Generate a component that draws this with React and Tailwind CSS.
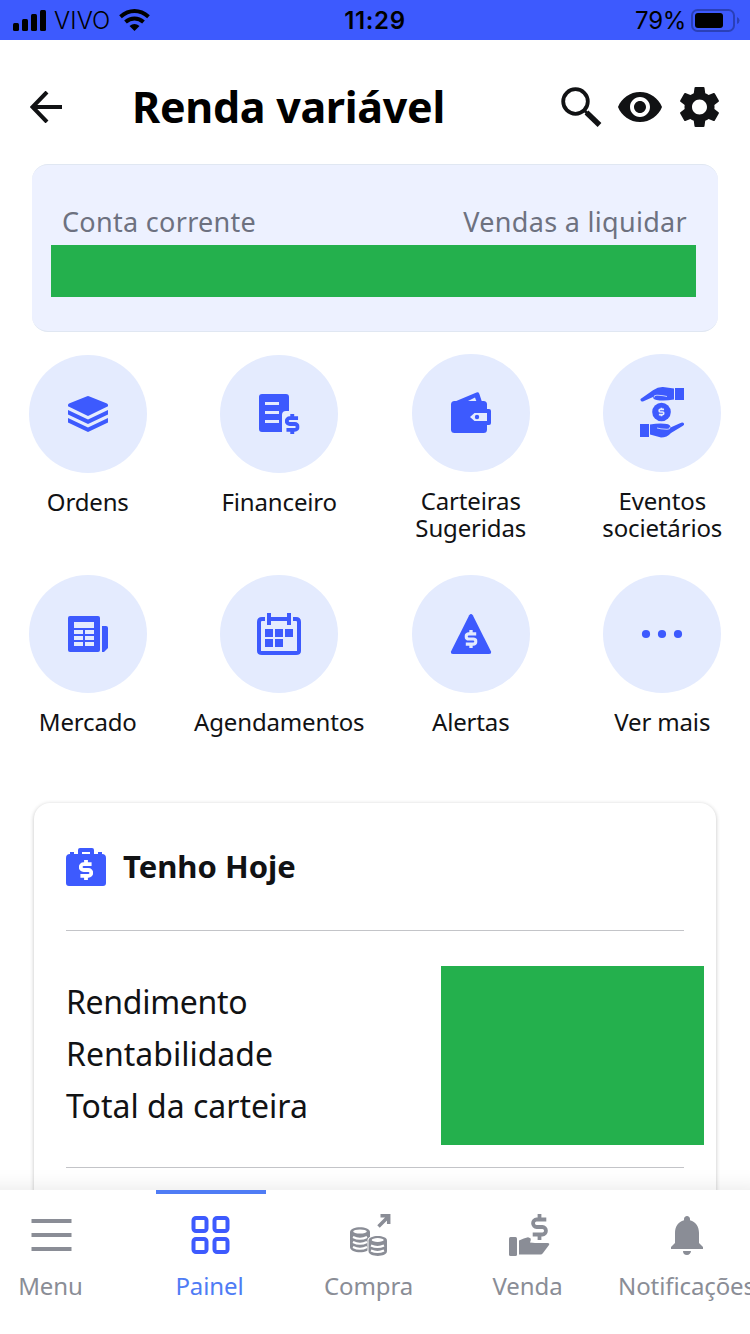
import React from 'react';
import { MdNotifications, MdRemoveRedEye, MdSettings } from 'react-icons/md';

const Dollar = ({ x, y, width, height, color, weight = 2.8 }) => (
    <svg x={x} y={y} width={width} height={height} viewBox="0 0 14 20" preserveAspectRatio="none" fill="none" stroke={color} strokeWidth={weight}>
        <path d="M7 0v4M7 16v4M12.6 4.2H4.6A2.9 2.9 0 0 0 4.6 10H9.4A2.9 2.9 0 0 1 9.4 15.8H1.4" />
    </svg>
);

const OrdersIcon = () => (
    <svg className="w-15 h-15" viewBox="0 0 60 60" fill="#3d5afe">
        <path d="M28.500 12.500q1.500-.8 3 0L49 19.500q1 .5 1 1.500v1.200L30 32 10 22.200V21q0-1 1-1.500z" />
        <path d="M10 26 30 35.500 50 26v4.500L30 40 10 30.500zM10 34 30 43.500 50 34v4.500L30 48 10 38.500z" />
    </svg>
);

const FinanceIcon = () => (
    <svg className="w-15 h-15" viewBox="0 0 60 60">
        <path fill="#3d5afe" d="M13 10h24q3 0 3 3v14h-3q-4 0-4 4v17H13q-3 0-3-3V13q0-3 3-3z" />
        <path stroke="#e4ebfe" strokeWidth="3" d="M16 19.500h14M16 28.500h14M16 37.500h14" />
        <Dollar x={36} y={30} width={14.5} height={20} color="#3d5afe" weight={3.8} />
    </svg>
);

const WalletIcon = () => (
    <svg className="w-15 h-15" viewBox="0 0 60 60" fill="#3d5afe">
        <path d="m14 18.500 21.500-9q2-.8 2.800 1.200L41 19zm12 0h9.500l-1.500-4z" fillRule="evenodd" />
        <rect x="10" y="18" width="36" height="32" rx="3.500" />
        <rect x="42" y="26" width="8" height="16" rx="2" />
        <path fill="#e4ebfe" d="M33.500 30H46v8H33.500L29 34z" />
        <circle cx="36" cy="34" r="2.200" />
    </svg>
);

const EventsIcon = () => (
    <svg className="w-15 h-15" viewBox="0 0 60 60" fill="#3d5afe">
        <rect x="43" y="5" width="9" height="12" />
        <path d="M8.500 16 21 7.300q5-3.500 10-3.300l11 1.500v11q-10 1.800-17.500.5-3.500-.7-3.500-3l-9.500 4.300q-2.500.8-3-1.300z" />
        <path fill="none" stroke="#e4ebfe" strokeWidth="0.8" d="M22 14.500q-.5-2.500 3-2.300 7 .3 10 1.300" />
        <circle cx="29.500" cy="29" r="9.300" />
        <rect x="8" y="41" width="9" height="13" />
        <path d="M18 41.500q10-1.800 17-.5 3.600.8 3.500 3.500l9.500-4.300q2.800-1.500 4 .2.500 1.200-1 2.300L39 50q-4 4.500-10 4.500L18 51.500z" />
        <path fill="none" stroke="#e4ebfe" strokeWidth="0.8" d="M38 44q.5 2.500-3 2.300-7-.3-10-1.300" />
        <Dollar x={26.2} y={24.5} width={6.5} height={9} color="#e4ebfe" weight={3.6} />
    </svg>
);

const MarketIcon = () => (
    <svg className="w-15 h-15" viewBox="0 0 60 60" fill="#3d5afe">
        <rect x="10" y="12" width="32" height="36" rx="2" />
        <path d="M44 22h4q2 0 2 2v20l-4 4h-2z" />
        <path fill="#e4ebfe" d="M16 18h20v6H16zM16 26h9v4h-9zM27 26h9v4h-9zM16 32h9v4h-9zM27 32h9v4h-9zM16 38h9v4h-9zM27 38h9v4h-9z" />
    </svg>
);

const CalendarIcon = () => (
    <svg className="w-15 h-15" viewBox="0 0 60 60" fill="#3d5afe">
        <path fill="none" stroke="#3d5afe" strokeWidth="4" d="M16 15h-3q-3 0-3 3v29q0 2 3 2h34q3 0 3-2V18q0-3-3-3h-3M22 15h16M20 9v12M40 9v12" />
        <path d="M16 25h8v8h-8zM26 25h8v8h-8zM36 25h8v8h-8zM16 35h8v8h-8zM26 35h8v8h-8z" />
    </svg>
);

const AlertIcon = () => (
    <svg className="w-15 h-15" viewBox="0 0 60 60" fill="#3d5afe">
        <path d="M28.200 11.200q1.800-2.400 3.600 0L50 47.500q.5 2.500-2 2.500H12q-2.500 0-2-2.500z" />
        <Dollar x={23.5} y={26} width={13} height={18} color="#e4ebfe" weight={3.6} />
    </svg>
);

const MoreIcon = () => (
    <svg className="w-15 h-15" viewBox="0 0 60 60" fill="#3d5afe">
        <circle cx="14" cy="30" r="4.100" />
        <circle cx="30" cy="30" r="4.100" />
        <circle cx="46" cy="30" r="4.100" />
    </svg>
);

const MenuIcon = () => (
    <svg className="w-12 h-12" viewBox="0 0 48 48" stroke="#8a8d96" strokeWidth="4">
        <path d="M4.500 10h40M4.500 24h40M4.500 38h40" />
    </svg>
);

const PanelIcon = () => (
    <svg className="w-12 h-12" viewBox="0 0 48 48" fill="none" stroke="#3d5afe" strokeWidth="4">
        <rect x="7.500" y="7" width="13" height="13" rx="2.500" />
        <rect x="28.500" y="7" width="13" height="13" rx="2.500" />
        <rect x="7.500" y="28" width="13" height="13" rx="2.500" />
        <rect x="28.500" y="28" width="13" height="13" rx="2.500" />
    </svg>
);

const BuyIcon = () => (
    <svg className="w-12 h-12" viewBox="0 0 48 48" fill="#8a8d96">
        <path d="M5 21c0-6.500 20-6.500 20 0v15c0 7-20 7-20 0z" />
        <ellipse cx="15" cy="20.500" rx="6.800" ry="2" fill="#fff" />
        <path fill="none" stroke="#fff" strokeWidth="2" d="M8 26q7 3.500 14 0M8 31q7 3.500 14 0M8 36q7 3.500 14 0" />
        <path fill="#fff" d="M22.500 29c0-6 20-6 20 0v11c0 7-20 7-20 0z" />
        <path d="M23.500 29.500c0-6 18.500-6 18.500 0v10.500c0 6.500-18.500 6.500-18.500 0z" />
        <ellipse cx="32.700" cy="29" rx="6" ry="1.900" fill="#fff" />
        <path fill="none" stroke="#fff" strokeWidth="2" d="M26 34.500q6.500 3 13 0M26 39.500q6.500 3 13 0" />
        <path fill="none" stroke="#8a8d96" strokeWidth="3.500" d="m33.500 15.500 10-10M35.500 4.800H43.700V13" />
    </svg>
);

const SellIcon = () => (
    <svg className="w-12 h-12" viewBox="0 0 48 48" fill="#8a8d96">
        <rect x="5" y="26" width="8" height="19" rx="1.500" />
        <path d="M15 29.500q5-2.500 9-3.200l2.500.9q1 2.200-.5 4.300l5 .5h12.500q2.500 0 1.500 2l-6 8q-1 1.500-2.500 1.500H15z" />
        <Dollar x={27} y={3} width={17} height={26} color="#8a8d96" weight={3.1} />
    </svg>
);

const shortcuts = [
    { label: 'Ordens', Icon: OrdersIcon },
    { label: 'Financeiro', Icon: FinanceIcon },
    { label: 'Carteiras Sugeridas', Icon: WalletIcon, tall: true },
    { label: 'Eventos societários', Icon: EventsIcon, tall: true },
    { label: 'Mercado', Icon: MarketIcon },
    { label: 'Agendamentos', Icon: CalendarIcon },
    { label: 'Alertas', Icon: AlertIcon },
    { label: 'Ver mais', Icon: MoreIcon },
];

const tabs = [
    { label: 'Menu', Icon: MenuIcon },
    { label: 'Painel', Icon: PanelIcon, active: true },
    { label: 'Compra', Icon: BuyIcon },
    { label: 'Venda', Icon: SellIcon },
    { label: 'Notificações', Icon: () => <MdNotifications className="w-12 h-12" /> },
];

const StatusBar = () => (
    <div className="h-10 shrink-0 bg-[#3d5afe] grid grid-cols-3 items-center text-black text-2xl font-['Inter',sans-serif]">
        <div className="flex items-center pl-[13px]">
            <svg className="w-[33px] h-[21px]" viewBox="0 0 33 21">
                <rect x="0" y="13" width="6" height="8" rx="1.500" />
                <rect x="9" y="9" width="6" height="12" rx="1.500" />
                <rect x="18" y="4" width="6" height="17" rx="1.500" />
                <rect x="27" y="0" width="6" height="21" rx="1.500" />
            </svg>
            <span className="mt-0.5 ml-2 w-[57px] font-light tracking-[0.1px]">VIVO</span>
            <svg className="ml-2 w-[31px] h-[22px]" viewBox="0 0 31 22" fill="none" stroke="#000" strokeWidth="4">
                <path d="M1.500 7.700Q8 2 15.500 2t14 5.700" />
                <path d="M6.500 13q4-3.500 9-3.500t9 3.500" />
                <path fill="#000" stroke="none" d="M15.500 22 10.500 17q5-3.800 10 0z" />
            </svg>
        </div>
        <div className="mt-0.5 text-center font-semibold tracking-[0.6px]">11:29</div>
        <div className="flex items-center justify-end pr-[10px]">
            <span className="mt-0.5 tracking-[-0.3px]">79%</span>
            <svg className="ml-[5px] w-[49px] h-[23px]" viewBox="0 0 49 23">
                <rect x="1" y="1" width="42" height="21" rx="5.500" fill="none" stroke="#2a40b8" strokeWidth="2" />
                <rect x="4" y="4" width="28" height="15" rx="3" />
                <path fill="#2a40b8" d="M46 8q2.500 1 2.500 3.500T46 15z" />
            </svg>
        </div>
    </div>
);

const Header = () => (
    <header className="h-[124px] shrink-0 flex items-center pl-[30px] pr-[25px] text-[#111214]">
        <svg className="w-8 h-8 mt-[10px]" viewBox="0 0 32 32" fill="none" stroke="currentColor" strokeWidth="4">
            <path d="M32 16H3M17 1 2.500 16 17 31" />
        </svg>
        <h1 className="ml-[70px] mt-[9px] flex-1 whitespace-nowrap text-[43px] leading-none font-bold text-black tracking-[-0.3px]">Renda variável</h1>
        <svg className="w-[42px] h-[42px] mt-[9px]" viewBox="0 0 42 42" fill="none" stroke="currentColor">
            <circle cx="15.500" cy="15.500" r="12.300" strokeWidth="3.800" />
            <path strokeWidth="3" d="m24 24 4 4" />
            <path strokeWidth="5.500" strokeLinejoin="round" d="m26.500 26.500 13 12.500" />
        </svg>
        <MdRemoveRedEye className="ml-[14px] mt-[10px] w-12 h-12" />
        <MdSettings className="ml-[10px] mt-[10px] w-[51px] h-[50px]" />
    </header>
);

const Shortcut = ({ label, Icon, tall }) => (
    <div className={tall ? 'flex flex-col items-center -mt-px' : 'flex flex-col items-center'}>
        <div className="w-[118px] h-[118px] rounded-full bg-[#e4ebfe] flex items-center justify-center">
            <Icon />
        </div>
        <p className={tall ? 'mt-[15px] w-[130px] text-center text-2xl leading-[27px] tracking-[-0.15px]' : 'mt-[15px] text-center text-2xl leading-[27px] tracking-[-0.15px]'}>{label}</p>
    </div>
);

const TabBar = () => (
    <nav className="absolute bottom-0 left-[-29px] w-[795px] h-36 grid grid-cols-5 bg-white shadow-[0_-2px_20px_rgba(0,0,0,0.09)]">
        {tabs.map(({ label, Icon, active }) => (
            <div key={label} className={active ? 'flex flex-col items-center text-[#4f7cf5]' : 'flex flex-col items-center text-[#8a8d96]'}>
                <div className={active ? 'h-1 w-[110px] ml-[3px] bg-[#4f7cf5]' : 'h-1'}></div>
                <div className="mt-[17px]"><Icon /></div>
                <span className="mt-3 text-2xl leading-[30px] whitespace-nowrap tracking-[-0.1px]">{label}</span>
            </div>
        ))}
    </nav>
);

const App = () => (
    <div className="relative w-[750px] h-[1334px] overflow-hidden flex flex-col bg-white text-[#111214] font-['Noto_Sans',sans-serif]">
        <StatusBar />
        <Header />
        <section className="mx-8 h-[168px] shrink-0 rounded-2xl border-y border-[#e0e7f2] bg-[#edf1ff] pt-[39px] pl-[19px] pr-[22px]">
            <div className="flex justify-between pl-[11px] pr-[9px] text-[27px] leading-9 tracking-[0.3px] text-[#6d7180]">
                <span>Conta corrente</span>
                <span>Vendas a liquidar</span>
            </div>
            <div className="mt-[5px] h-[52px] bg-[#24b04d]"></div>
        </section>
        <section className="mt-[23px] -mx-2 shrink-0 grid grid-cols-4 auto-rows-[220px]">
            {shortcuts.map((item) => (
                <Shortcut key={item.label} {...item} />
            ))}
        </section>
        <section className="mt-[8px] mx-[34px] h-[450px] shrink-0 rounded-2xl bg-white px-8 shadow-[0_1px_4px_rgba(0,0,0,0.24)]">
            <div className="flex items-center h-[128px] border-b border-[#c3c4c8]">
                <svg className="w-10 h-[38px]" viewBox="0 0 40 38" fill="#3d5afe">
                    <path fillRule="evenodd" d="M4 6V4h4v2h4V2q0-2 2-2h12q2 0 2 2v4h4V4h4v2q4 0 4 4v25q0 3-3 3H3q-3 0-3-3V10q0-4 4-4zm12 0h8V4h-8z" />
                    <Dollar x={13} y={12} width={14} height={20} color="#fff" weight={3.8} />
                </svg>
                <h2 className="ml-[17px] text-[31px] leading-none font-bold">Tenho Hoje</h2>
            </div>
            <div className="mt-[35px] mr-[-20px] flex justify-between">
                <ul className="pt-[10px] text-[32px] leading-[52px]">
                    <li className="tracking-[-0.3px]">Rendimento</li>
                    <li>Rentabilidade</li>
                    <li>Total da carteira</li>
                </ul>
                <div className="w-[263px] h-[179px] bg-[#24b04d]"></div>
            </div>
            <div className="mt-[22px] border-t border-[#c3c4c8]"></div>
        </section>
        <TabBar />
    </div>
);

export default App;
